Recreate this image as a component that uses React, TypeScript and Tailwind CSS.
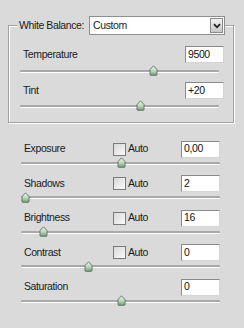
const font = { fontFamily: '"Liberation Sans", Arial, sans-serif' };

function Thumb() {
  return (
    <svg width="9" height="11" viewBox="0 0 9 11">
      <defs>
        <linearGradient id="tg" x1="0" y1="0" x2="0" y2="1">
          <stop offset="0" stopColor="#eef6ee" />
          <stop offset="0.55" stopColor="#b9d6bb" />
          <stop offset="1" stopColor="#6f9a74" />
        </linearGradient>
      </defs>
      <path d="M1 4.5 L4.5 0.8 L8 4.5 V9.5 Q8 10.3 7.2 10.3 H1.8 Q1 10.3 1 9.5 Z" fill="url(#tg)" stroke="#5d6e60" strokeWidth="0.9" />
    </svg>
  );
}

function Slider({ pos }: { pos: number }) {
  return (
    <div className="relative h-[10px] w-[199px] flex items-center">
      <div className="w-full h-[3px] bg-[#a8a8a8] border-b border-white rounded-[1px]" />
      <div className="absolute top-[-1px]" style={{ left: pos - 4 }}>
        <Thumb />
      </div>
    </div>
  );
}

function ValueBox({ value }: { value: string }) {
  return (
    <div className="ml-auto w-[39px] h-[17px] bg-white border border-[#8a8a8a] border-r-[#d4d4d4] border-b-[#d4d4d4] flex items-center pl-[2px] text-[10.5px] text-[#111]">
      {value}
    </div>
  );
}

function AutoCheck() {
  return (
    <div className="flex items-center gap-[2px] absolute left-[92px]">
      <div className="w-[13px] h-[13px] border border-[#7a7a7a] bg-gradient-to-br from-[#d8d8d8] to-[#fafafa]" />
      <span>Auto</span>
    </div>
  );
}

function Row({ label, value, pos, auto }: { label: string; value: string; pos: number; auto?: boolean }) {
  return (
    <div className="flex flex-col">
      <div className="relative flex items-center h-[16px]">
        <span className="pl-[3px]">{label}</span>
        {auto && <AutoCheck />}
        <ValueBox value={value} />
      </div>
      <div className="mt-[1px]">
        <Slider pos={pos} />
      </div>
    </div>
  );
}

export default function App() {
  return (
    <div
      className="w-[244px] h-[328px] bg-[#dadada] text-[10.5px] tracking-[-0.4px] text-[#1a1a1a] pt-[16px] pl-[8px] overflow-hidden"
      style={font}
    >
      <fieldset className="w-[226px] h-[107px] border border-[#a2a2a2] shadow-[inset_1px_1px_0_#fff,1px_1px_0_#fff] px-[8px]">
        <legend className="flex items-center bg-[#dadada] pl-[2px]">
          <span className="mr-[5px]">White Balance:</span>
          <div className="w-[136px] h-[19px] bg-white border border-[#8e8e8e] flex items-center pl-[3px]">
            <span>Custom</span>
            <div className="ml-auto mr-[1px] w-[13px] h-[15px] border border-[#8c8c8c] bg-gradient-to-b from-[#f2f2f2] to-[#c8c8c8] flex items-center justify-center">
              <svg width="8" height="6" viewBox="0 0 8 6">
                <path d="M1 1.2 L4 4.3 L7 1.2" fill="none" stroke="#222" strokeWidth="1.8" />
              </svg>
            </div>
          </div>
        </legend>
        <div className="flex flex-col gap-[3px] pl-[3px] pt-[11px]">
          <div className="flex flex-col">
            <div className="flex items-center h-[17px] pr-[1px]">
              <span className="pl-[3px]">Temperature</span>
              <ValueBox value="9500" />
            </div>
            <div className="mt-[3px]">
              <Slider pos={133} />
            </div>
          </div>
          <div className="flex flex-col mt-[3px]">
            <div className="flex items-center h-[17px] pr-[1px]">
              <span className="pl-[3px]">Tint</span>
              <ValueBox value="+20" />
            </div>
            <div className="mt-[2px]">
              <Slider pos={120} />
            </div>
          </div>
        </div>
      </fieldset>
      <div className="flex flex-col gap-[7.5px] pl-[13px] pt-[18px] w-[212px]">
        <Row label="Exposure" value="0,00" pos={100} auto />
        <Row label="Shadows" value="2" pos={4} auto />
        <Row label="Brightness" value="16" pos={22} auto />
        <Row label="Contrast" value="0" pos={67} auto />
        <Row label="Saturation" value="0" pos={100} />
      </div>
    </div>
  );
}
